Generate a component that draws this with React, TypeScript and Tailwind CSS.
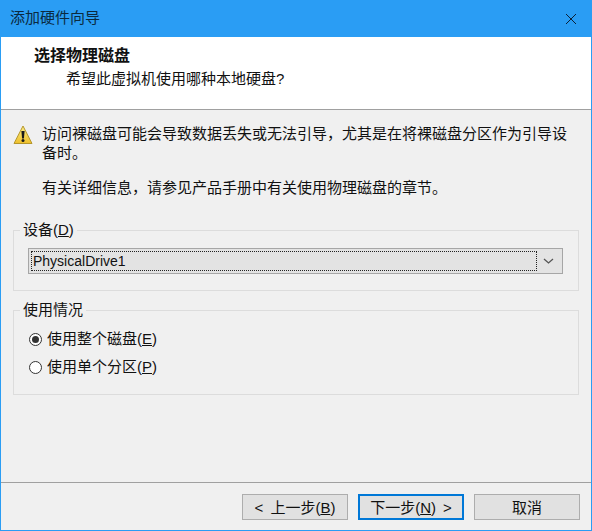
const font = "font-['Liberation_Sans','Noto_Sans_CJK_SC',sans-serif]";

function Radio({ checked, label, mnemonic }: { checked?: boolean; label: string; mnemonic: string }) {
  return (
    <div className="flex items-center h-[18px]">
      <span className="w-[13px] h-[13px] rounded-full border border-[#333] bg-white flex items-center justify-center">
        {checked && <span className="w-[7px] h-[7px] rounded-full bg-[#333]" />}
      </span>
      <span className="ml-[5px] text-[15px] leading-[18px]">
        {label}(<span className="underline">{mnemonic}</span>)
      </span>
    </div>
  );
}

function WizardButton({ children, primary }: { children: React.ReactNode; primary?: boolean }) {
  return (
    <div
      className={`w-[106px] h-[26px] flex items-center justify-center whitespace-pre bg-[#e1e1e1] text-[15px] leading-none ${
        primary ? "border-2 border-[#0078d7]" : "border border-[#adadad]"
      }`}
    >
      {children}
    </div>
  );
}

export default function App() {
  return (
    <div className={`w-[592px] h-[531px] flex flex-col border border-[#2a9df4] border-t-0 bg-[#f0f0f0] text-[#111] ${font}`}>
      <div className="h-[37px] shrink-0 -mx-px bg-[#2a9df4] flex items-center justify-between pl-[10px] pr-[15px]">
        <span className="text-[15px] text-[#0b2a40]">添加硬件向导</span>
        <svg width="12" height="12" viewBox="0 0 12 12" fill="none" stroke="#0b2036" strokeWidth="1">
          <path d="M1 1L11 11M11 1L1 11" />
        </svg>
      </div>

      <div className="h-[73px] shrink-0 bg-white border-b border-[#a0a0a0] pl-[33px] pt-[9px]">
        <div className="text-[16px] leading-[20px] font-bold">选择物理磁盘</div>
        <div className="text-[15px] leading-[20px] mt-[3px] pl-[32px]">希望此虚拟机使用哪种本地硬盘?</div>
      </div>

      <div className="flex-1 flex flex-col px-[12px]">
        <div className="flex mt-[14px]">
          <svg width="20" height="20" viewBox="0 0 20 20" className="shrink-0 mt-[1px]">
            <defs>
              <linearGradient id="warn" x1="0" y1="0" x2="0" y2="1">
                <stop offset="0" stopColor="#fdf08a" />
                <stop offset="1" stopColor="#eebf2a" />
              </linearGradient>
            </defs>
            <path d="M10 1L19 18.5H1Z" fill="url(#warn)" stroke="#b5962a" strokeWidth="1" strokeLinejoin="round" />
            <path d="M8.4 6h3.2l-.7 7.5H9.1z" fill="#1a1a1a" />
            <circle cx="10" cy="15.6" r="1.5" fill="#1a1a1a" />
          </svg>
          <div className="ml-[9px] text-[15px] leading-[19px]">
            <p className="w-[530px]">访问裸磁盘可能会导致数据丢失或无法引导，尤其是在将裸磁盘分区作为引导设备时。</p>
            <p className="mt-[16px]">有关详细信息，请参见产品手册中有关使用物理磁盘的章节。</p>
          </div>
        </div>

        <fieldset className="mt-[24px] h-[70px] border border-[#dcdcdc] px-[15px]">
          <legend className="text-[15px] leading-[18px] -ml-[9px] px-[3px]">
            设备(<span className="underline">D</span>)
          </legend>
          <div className="h-[26px] mt-[9px] -ml-[1px] border border-[#a6a6a6] bg-[#e3e3e3] flex items-center p-[2px]">
            <div className="flex-1 h-full border border-dotted border-[#222] flex items-center pl-[1px] text-[14px]">
              PhysicalDrive1
            </div>
            <svg width="11" height="6" viewBox="0 0 11 6" fill="none" stroke="#555" strokeWidth="1.3" className="mx-[6px]">
              <path d="M1 1l4.5 4L10 1" />
            </svg>
          </div>
        </fieldset>

        <fieldset className="mt-[10px] h-[94px] border border-[#dcdcdc] pl-[15px]">
          <legend className="text-[15px] leading-[18px] -ml-[9px] px-[3px]">使用情况</legend>
          <div className="mt-[11px] flex flex-col gap-[10px]">
            <Radio checked label="使用整个磁盘" mnemonic="E" />
            <Radio label="使用单个分区" mnemonic="P" />
          </div>
        </fieldset>
      </div>

      <div className="h-[48px] shrink-0 border-t border-[#a0a0a0] flex justify-end items-start gap-[10px] pr-[11px] pt-[11px]">
        <WizardButton>
          <span className="mr-[7px]">&lt;</span>上一步(<span className="underline">B</span>)
        </WizardButton>
        <WizardButton primary>
          下一步(<span className="underline">N</span>)<span className="ml-[7px]">&gt;</span>
        </WizardButton>
        <WizardButton>取消</WizardButton>
      </div>
    </div>
  );
}
